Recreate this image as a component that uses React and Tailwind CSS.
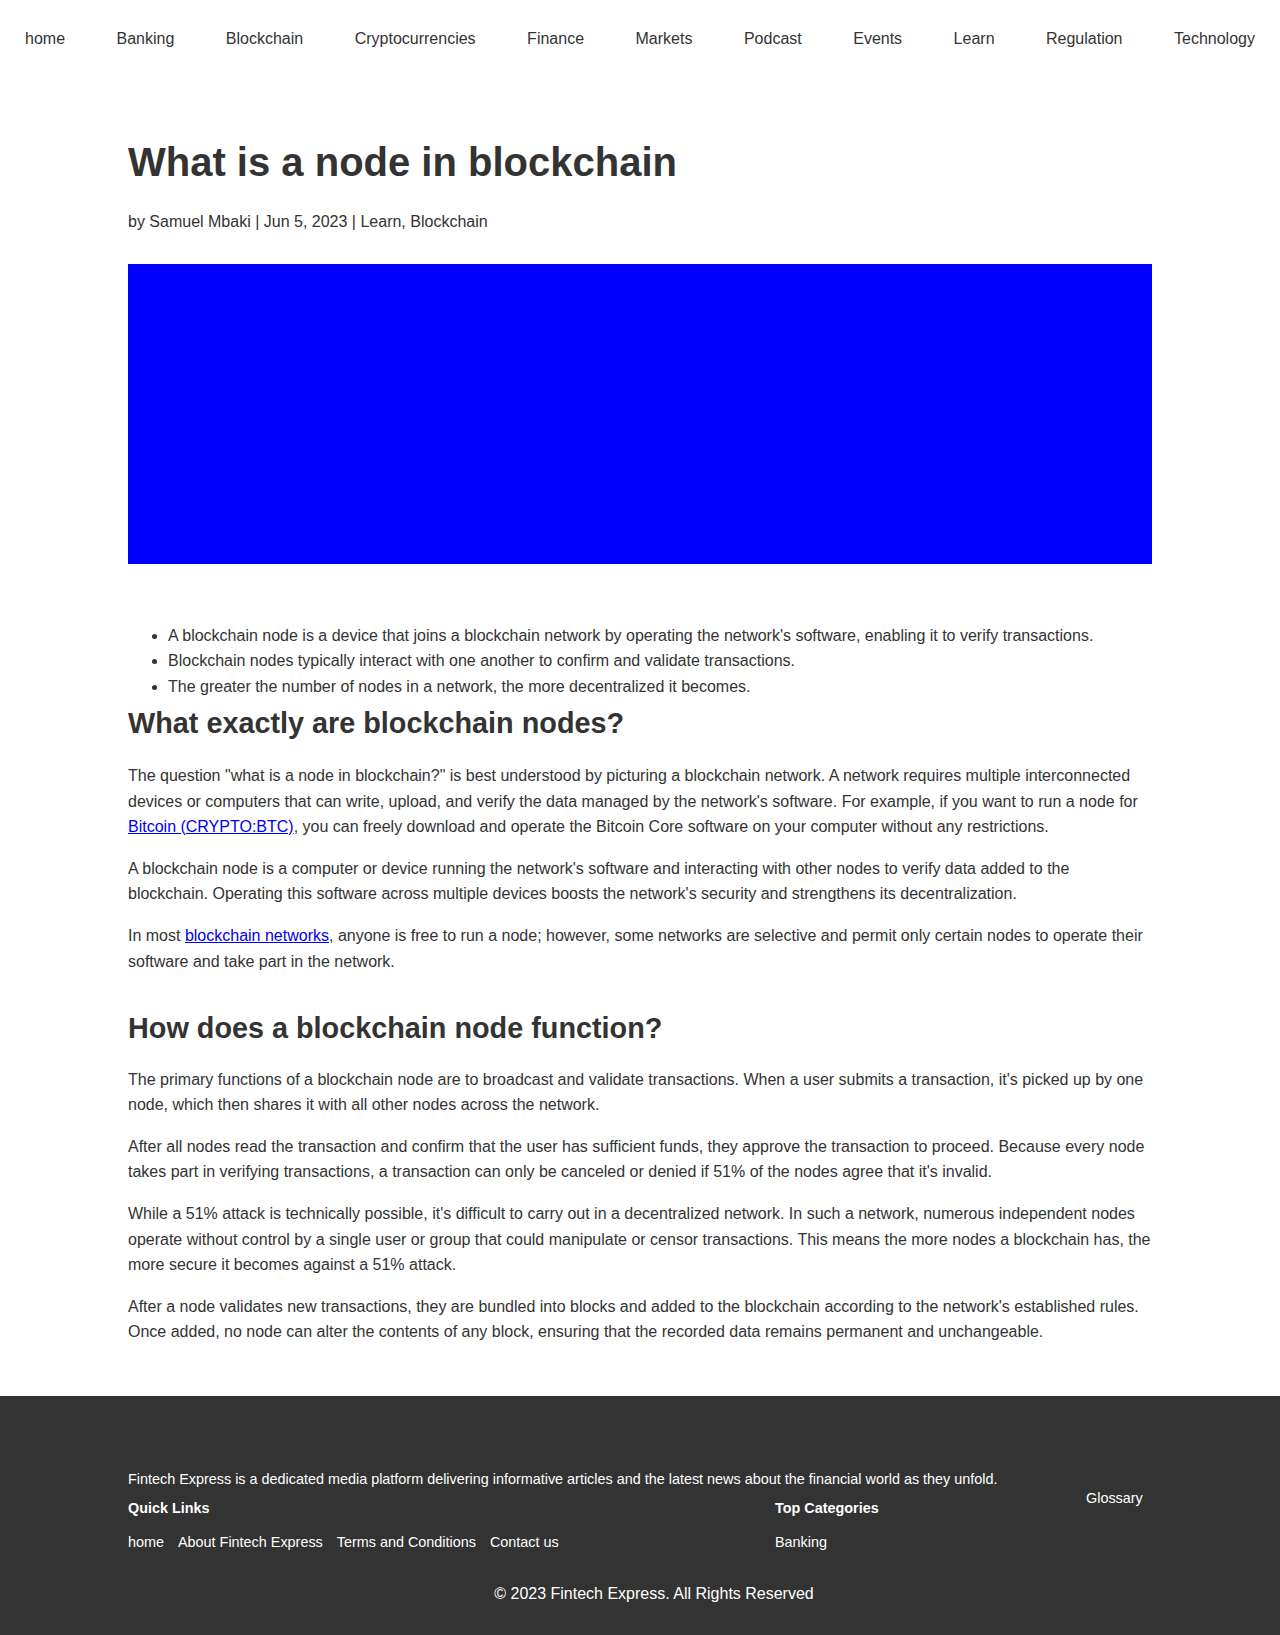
import React from 'react';

const navItems = ['home', 'Banking', 'Blockchain', 'Cryptocurrencies', 'Finance', 'Markets', 'Podcast', 'Events', 'Learn', 'Regulation', 'Technology'];

function Nav() {
  return (
    <nav className="flex justify-between items-center h-[76px] pt-[2px]">
      {navItems.map((item) => (
        <a key={item} href="#" className="px-[25px] text-[16px] text-[#333]">
          {item}
        </a>
      ))}
    </nav>
  );
}

function Article() {
  return (
    <main className="max-w-[1024px] mx-auto pt-[62px] pb-[51px] text-[#333]">
      <h1 className="text-[40px] leading-[48px] font-bold">What is a node in blockchain</h1>
      <p className="mt-[23px] text-[16px] leading-[25.6px]">by Samuel Mbaki | Jun 5, 2023 | Learn, Blockchain</p>
      <div className="mt-[29px] h-[300px] w-full bg-[#0000ff]"></div>

      <ul className="mt-[59px] list-disc pl-[40px] text-[16px] leading-[25.6px]">
        <li>A blockchain node is a device that joins a blockchain network by operating the network's software, enabling it to verify transactions.</li>
        <li>Blockchain nodes typically interact with one another to confirm and validate transactions.</li>
        <li>The greater the number of nodes in a network, the more decentralized it becomes.</li>
      </ul>

      <h2 className="mt-[7px] text-[28.8px] leading-[34.56px] font-bold">What exactly are blockchain nodes?</h2>
      <div className="mt-[22px] flex flex-col gap-[16px] text-[16px] leading-[25.6px]">
        <p>
          The question "what is a node in blockchain?" is best understood by picturing a blockchain network. A network requires multiple interconnected devices or computers that can write, upload, and verify the data managed by the network's software. For example, if you want to run a node for{' '}
          <a href="#" className="text-[#0000ee] underline">Bitcoin (CRYPTO:BTC)</a>, you can freely download and operate the Bitcoin Core software on your computer without any restrictions.
        </p>
        <p>
          A blockchain node is a computer or device running the network's software and interacting with other nodes to verify data added to the blockchain. Operating this software across multiple devices boosts the network's security and strengthens its decentralization.
        </p>
        <p>
          In most <a href="#" className="text-[#0000ee] underline">blockchain networks</a>, anyone is free to run a node; however, some networks are selective and permit only certain nodes to operate their software and take part in the network.
        </p>
      </div>

      <h2 className="mt-[37px] text-[28.8px] leading-[34.56px] font-bold">How does a blockchain node function?</h2>
      <div className="mt-[21px] flex flex-col gap-[16px] text-[16px] leading-[25.6px]">
        <p>
          The primary functions of a blockchain node are to broadcast and validate transactions. When a user submits a transaction, it's picked up by one node, which then shares it with all other nodes across the network.
        </p>
        <p>
          After all nodes read the transaction and confirm that the user has sufficient funds, they approve the transaction to proceed. Because every node takes part in verifying transactions, a transaction can only be canceled or denied if 51% of the nodes agree that it's invalid.
        </p>
        <p>
          While a 51% attack is technically possible, it's difficult to carry out in a decentralized network. In such a network, numerous independent nodes operate without control by a single user or group that could manipulate or censor transactions. This means the more nodes a blockchain has, the more secure it becomes against a 51% attack.
        </p>
        <p>
          After a node validates new transactions, they are bundled into blocks and added to the blockchain according to the network's established rules. Once added, no node can alter the contents of any block, ensuring that the recorded data remains permanent and unchangeable.
        </p>
      </div>
    </main>
  );
}

function Footer() {
  return (
    <footer className="bg-[#333] text-white pt-[75px] pb-[32px]">
      <div className="max-w-[1024px] mx-auto text-[14.4px] leading-[16.5px]">
        <p>Fintech Express is a dedicated media platform delivering informative articles and the latest news about the financial world as they unfold.</p>
        <div className="mt-[2px] flex">
          <div className="w-[647px] pt-[10px]">
            <h4 className="font-bold">Quick Links</h4>
            <ul className="mt-[18px] flex gap-[14px]">
              <li><a href="#">home</a></li>
              <li><a href="#">About Fintech Express</a></li>
              <li><a href="#">Terms and Conditions</a></li>
              <li><a href="#">Contact us</a></li>
            </ul>
          </div>
          <div className="w-[311px] pt-[10px]">
            <h4 className="font-bold">Top Categories</h4>
            <ul className="mt-[18px]">
              <li><a href="#">Banking</a></li>
            </ul>
          </div>
          <div>
            <a href="#">Glossary</a>
          </div>
        </div>
        <p className="mt-[34px] pl-[28px] text-center text-[16px] leading-[18.4px]">© 2023 Fintech Express. All Rights Reserved</p>
      </div>
    </footer>
  );
}

export default function App() {
  return (
    <div className="bg-white min-h-[1635px] flex flex-col" style={{ fontFamily: '"Liberation Sans", Arial, sans-serif' }}>
      <Nav />
      <Article />
      <Footer />
    </div>
  );
}
